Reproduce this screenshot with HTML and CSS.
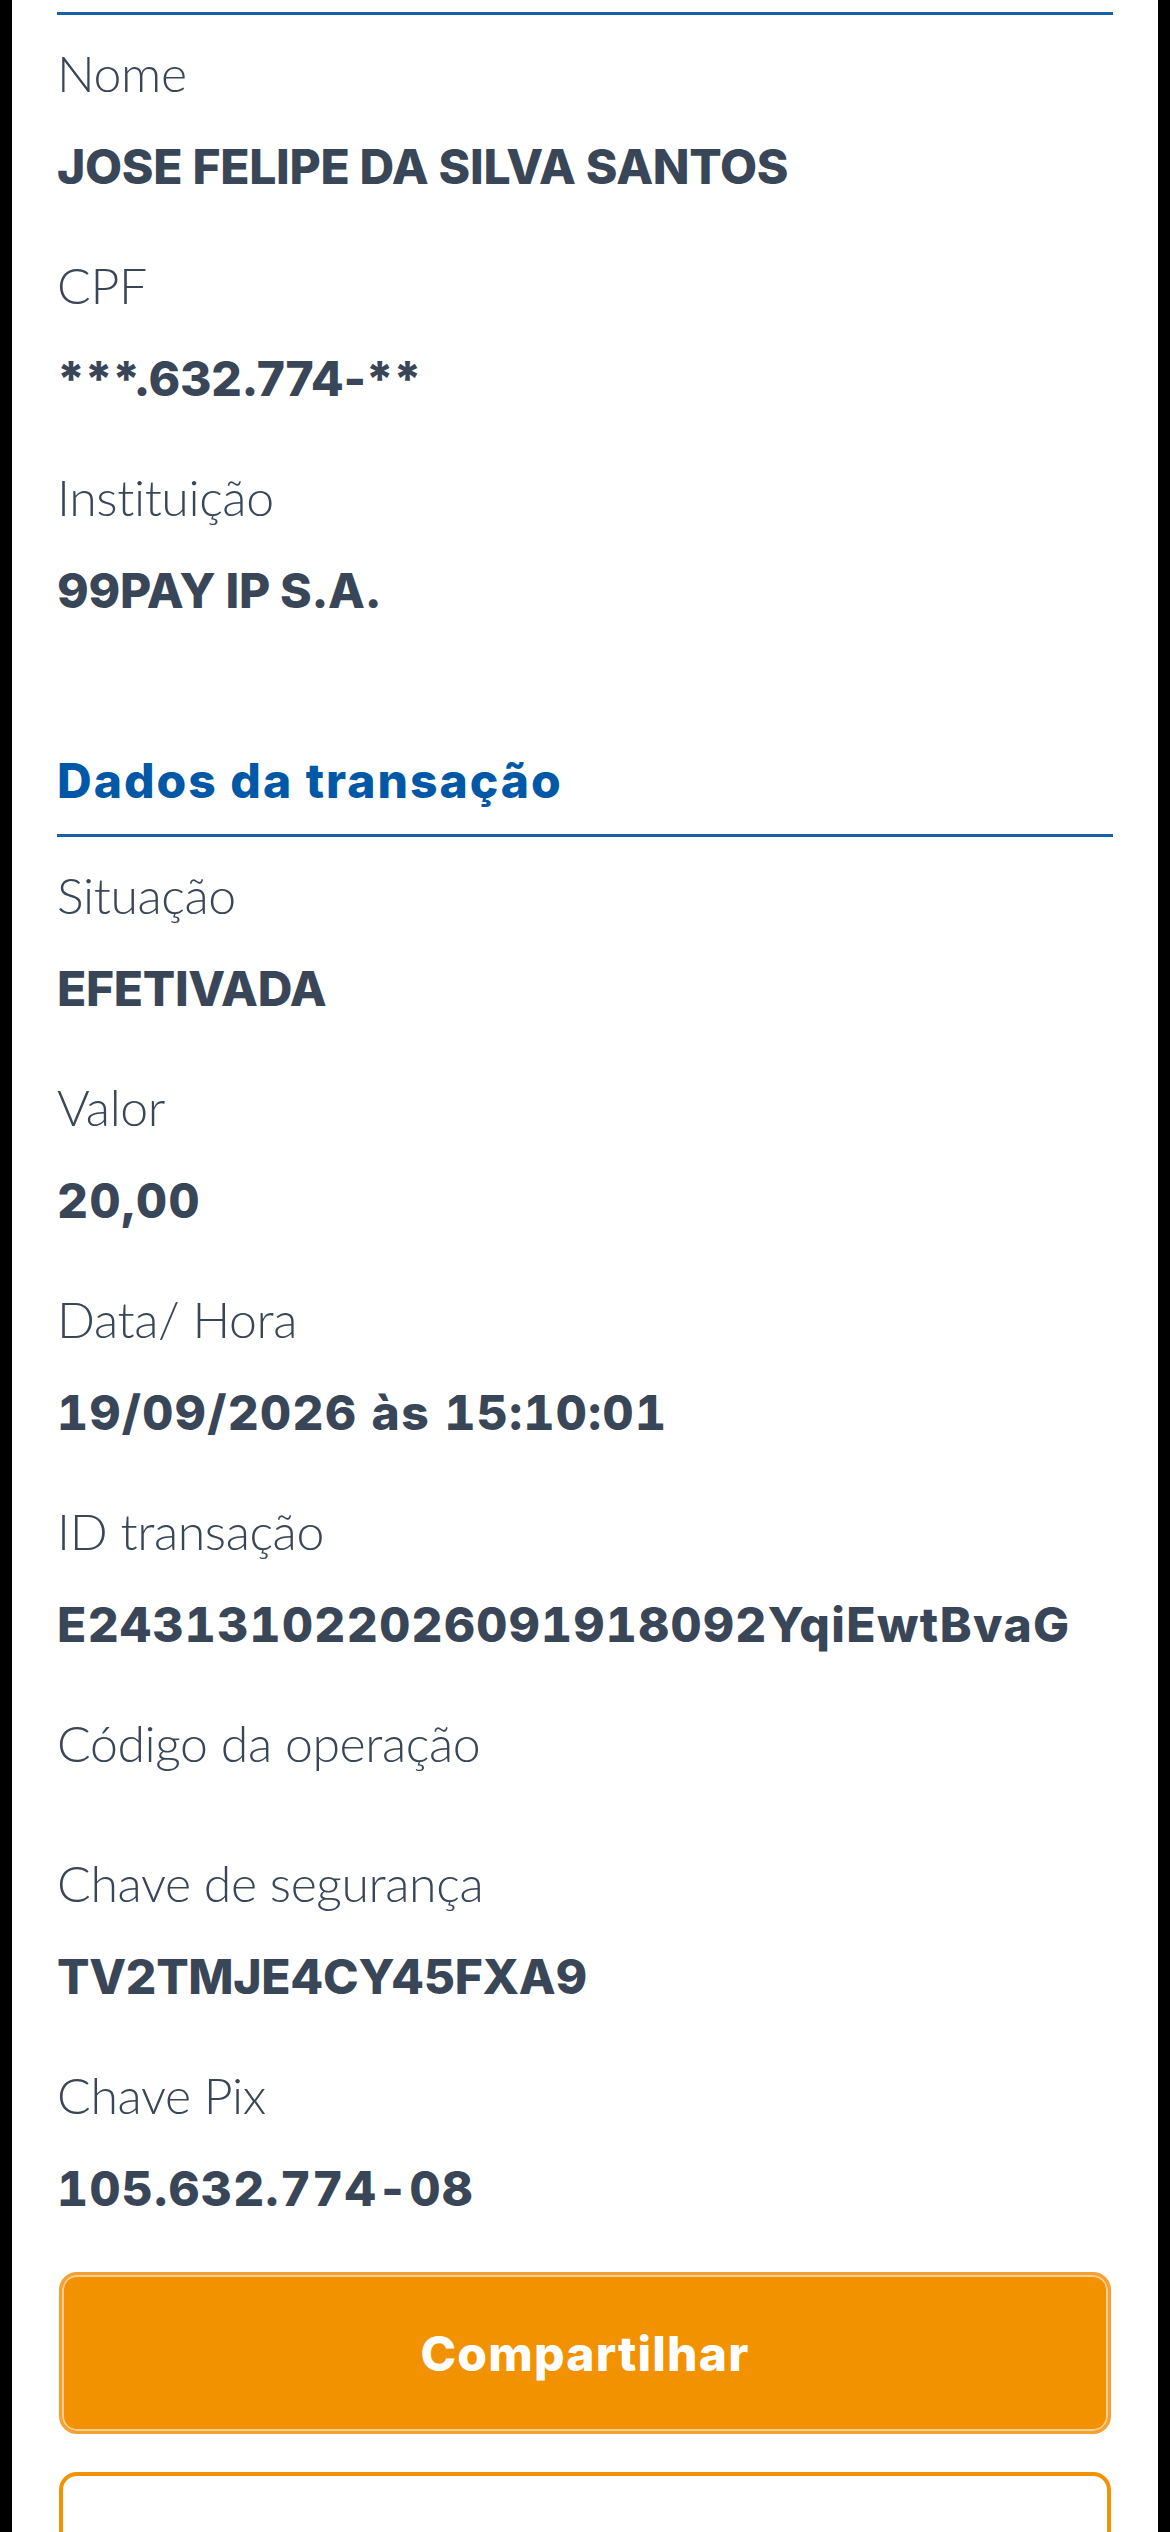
FILE: index.html
```html
<!DOCTYPE html>
<html lang="pt-BR">
<head>
<meta charset="utf-8">
<title>Comprovante</title>
<link rel="stylesheet" href="styles.css">
</head>
<body>
<div class="page">
  <section class="section">
    <div class="rule"></div>
    <div class="fields">
      <div class="field"><div class="label">Nome</div><div class="value">JOSE FELIPE DA SILVA SANTOS</div></div>
      <div class="field"><div class="label">CPF</div><div class="value">***.632.774-**</div></div>
      <div class="field"><div class="label">Instituição</div><div class="value">99PAY IP S.A.</div></div>
    </div>
  </section>
  <section class="section">
    <h2 class="heading">Dados da transação</h2>
    <div class="rule"></div>
    <div class="fields">
      <div class="field"><div class="label">Situação</div><div class="value">EFETIVADA</div></div>
      <div class="field"><div class="label">Valor</div><div class="value num">20,00</div></div>
      <div class="field"><div class="label">Data/ Hora</div><div class="value num">19/09/2026 às 15:10:01</div></div>
      <div class="field"><div class="label">ID transação</div><div class="value num">E243131022026091918092YqiEwtBvaG</div></div>
      <div class="field"><div class="label">Código da operação</div><div class="value"></div></div>
      <div class="field"><div class="label">Chave de segurança</div><div class="value">TV2TMJE4CY45FXA9</div></div>
      <div class="field"><div class="label">Chave Pix</div><div class="value num">105.632.774-08</div></div>
    </div>
  </section>
  <div class="actions">
    <button class="btn btn-primary">Compartilhar</button>
    <button class="btn btn-outline"></button>
  </div>
</div>
</body>
</html>
```
FILE: styles.css
```css
html, body {
  margin: 0;
  padding: 0;
}
body {
  background: #000;
  font-family: "Lato", "Noto Sans", sans-serif;
  color: #394657;
}
.page {
  margin: 0 12px;
  background: #fff;
  padding: 12px 45px 0;
  height: 2532px;
  box-sizing: border-box;
  overflow: hidden;
}
.section {
  display: flow-root;
}
.rule {
  height: 3px;
  background: #1760aa;
}
.fields {
  padding-top: 28px;
}
.field {
  display: flex;
  flex-direction: column;
  margin-bottom: 52px;
}
.section:last-of-type .field:last-child {
  margin-bottom: 47px;
}
.label {
  font-size: 50px;
  line-height: 60px;
  font-weight: 300;
  letter-spacing: -0.4px;
  white-space: nowrap;
}
.value {
  margin-top: 28px;
  font-family: "Inter", "Lato", sans-serif;
  font-size: 48px;
  line-height: 72px;
  font-weight: 800;
  letter-spacing: -0.3px;
  white-space: nowrap;
}
.value.num {
  font-variant-numeric: tabular-nums;
  letter-spacing: 1.4px;
}
.heading {
  margin: 72px 0 23px;
  font-family: "Inter", "Lato", sans-serif;
  font-size: 48px;
  line-height: 60px;
  font-weight: 800;
  letter-spacing: 2px;
  color: #0058a6;
}
.actions {
  display: flex;
  flex-direction: column;
  gap: 38px;
  padding: 0 2px;
}
.btn {
  display: block;
  width: 100%;
  height: 162px;
  border-radius: 18px;
  font-family: "Inter", "Lato", sans-serif;
  font-size: 48px;
  font-weight: 800;
  letter-spacing: 1.2px;
  color: #fff;
  padding: 0;
}
.btn-primary {
  background: #f39200;
  border: 3px solid #f5a033;
  box-shadow: inset 0 0 0 2px #fbcf94;
}
.btn-outline {
  background: #fff;
  border: 4px solid #f39200;
}
```
